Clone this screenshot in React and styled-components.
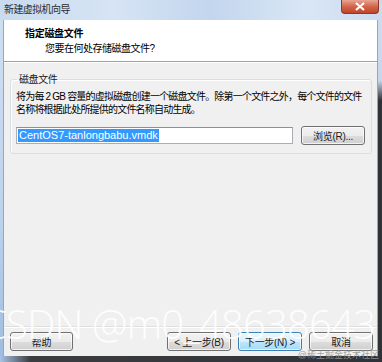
import React from "react";
import styled, { createGlobalStyle } from "styled-components";

const GlobalStyle = createGlobalStyle`
  html, body {
    margin: 0;
    padding: 0;
    background: #3a3c40;
  }
  * {
    box-sizing: border-box;
  }
`;

const CJK = `"Liberation Sans", "Noto Sans CJK SC", sans-serif`;

function App() {
  return (
    <>
      <GlobalStyle />
      <Window>
        <TitleBar>
          <TitleText>新建虚拟机向导</TitleText>
          <CloseButton>
            <svg width="12" height="9" viewBox="0 0 12 9">
              <path d="M2 1 L10 8 M10 1 L2 8" stroke="#fff" strokeWidth="2.2" />
            </svg>
          </CloseButton>
        </TitleBar>
        <Body>
          <LeftFrame />
          <Client>
            <Header>
              <HeaderTitle>指定磁盘文件</HeaderTitle>
              <HeaderSub>您要在何处存储磁盘文件?</HeaderSub>
            </Header>
            <Content>
              <GroupBox>
                <Legend>磁盘文件</Legend>
                <Description>
                  将为每 2 GB 容量的虚拟磁盘创建一个磁盘文件。除第一个文件之外，每个文件的文件
                  <br />
                  名称将根据此处所提供的文件名称自动生成。
                </Description>
                <FileRow>
                  <FileInput>
                    <Selected>CentOS7-tanlongbabu.vmdk</Selected>
                  </FileInput>
                  <Button width={64}>浏览(R)...</Button>
                </FileRow>
              </GroupBox>
            </Content>
            <Footer>
              <Button width={63}>帮助</Button>
              <NavGroup>
                <Button width={64}>&lt; 上一步(B)</Button>
                <Button width={64} primary>
                  下一步(N) &gt;
                </Button>
                <Button width={64}>取消</Button>
              </NavGroup>
            </Footer>
          </Client>
          <RightFrame />
        </Body>
        <BottomFrame />
        <Watermark>CSDN @m0_48638643</Watermark>
        <SmallMark>@稀土掘金技术社区</SmallMark>
      </Window>
    </>
  );
}

const Window = styled.div`
  position: relative;
  width: 382px;
  height: 362px;
  display: flex;
  flex-direction: column;
  overflow: hidden;
  font-family: ${CJK};
  font-size: 10px;
  color: #000;
`;

const TitleBar = styled.div`
  height: 20px;
  display: flex;
  align-items: flex-start;
  justify-content: space-between;
  padding-left: 4px;
  padding-right: 3px;
  background: linear-gradient(
    90deg,
    #c9dbef 0%,
    #d6e4f4 30%,
    #c3d6ee 55%,
    #d9e6f5 80%,
    #cbdcf0 100%
  );
`;

const TitleText = styled.span`
  margin-top: 4px;
  font-size: 10px;
  line-height: 12px;
  color: #2a2a2a;
  letter-spacing: -0.6px;
`;

const CloseButton = styled.div`
  width: 38px;
  height: 14px;
  display: flex;
  align-items: center;
  justify-content: center;
  border: 1px solid #8a3a2a;
  border-top: none;
  border-radius: 0 0 4px 4px;
  background: linear-gradient(180deg, #e8a593 0%, #d2654a 50%, #c0452a 100%);
`;

const Body = styled.div`
  flex: 1;
  display: flex;
  min-height: 0;
`;

const LeftFrame = styled.div`
  width: 4px;
  background: linear-gradient(180deg, #cfdff2 0%, #bcd2ec 60%, #9fbde2 100%);
  border-right: 1px solid #8fa8c6;
`;

const RightFrame = styled.div`
  width: 5px;
  background: linear-gradient(
    180deg,
    #cddcf0 0%,
    #c5d7ee 18%,
    #2f3236 24%,
    #2f3236 100%
  );
  border-left: 1px solid #8fa8c6;
`;

const Client = styled.div`
  flex: 1;
  display: flex;
  flex-direction: column;
  background: #f0f0f0;
`;

const Header = styled.div`
  height: 42px;
  display: flex;
  flex-direction: column;
  justify-content: center;
  padding-left: 21px;
  background: #fff;
  border-bottom: 1px solid #a0a0a0;
  box-shadow: 0 1px 0 #fff;
`;

const HeaderTitle = styled.div`
  font-weight: bold;
  font-size: 10px;
  line-height: 13px;
  letter-spacing: -0.3px;
`;

const HeaderSub = styled.div`
  margin-top: 2px;
  padding-left: 20px;
  font-size: 10px;
  line-height: 13px;
  letter-spacing: -0.5px;
`;

const Content = styled.div`
  flex: 1;
  padding: 11px 5px 0 6px;
`;

const GroupBox = styled.fieldset`
  margin: 0;
  padding: 0 6px 8px 5px;
  border: 1px solid #d5dfe5;
  border-radius: 3px;
  box-shadow: inset 1px 1px 0 #fff;
`;

const Legend = styled.legend`
  padding: 0 2px;
  margin-left: 1px;
  font-size: 10px;
  line-height: 13px;
  letter-spacing: -0.4px;
  color: #1a1a1a;
`;

const Description = styled.p`
  margin: 4px 0 0;
  font-size: 10px;
  line-height: 13px;
  letter-spacing: -0.8px;
  white-space: nowrap;
`;

const FileRow = styled.div`
  display: flex;
  align-items: center;
  justify-content: space-between;
  margin-top: 10px;
`;

const FileInput = styled.div`
  width: 277px;
  height: 17px;
  display: flex;
  align-items: center;
  padding-left: 1px;
  background: #fff;
  border: 1px solid #abadb3;
  border-top-color: #8e8f8f;
`;

const Selected = styled.span`
  padding: 0 1px;
  background: #3399ff;
  color: #fff;
  font-size: 11px;
  line-height: 13px;
`;

const Button = styled.div`
  width: ${(p) => p.width}px;
  height: 19px;
  display: flex;
  align-items: center;
  justify-content: center;
  font-size: 10px;
  letter-spacing: -0.3px;
  color: #1a1a1a;
  border: 1px solid ${(p) => (p.primary ? "#3c7fb1" : "#707070")};
  border-radius: 3px;
  background: ${(p) =>
    p.primary
      ? "linear-gradient(180deg, #eaf6fd 0%, #d9f0fc 50%, #bee6fd 51%, #a7d9f5 100%)"
      : "linear-gradient(180deg, #f2f2f2 0%, #ebebeb 50%, #dddddd 51%, #cfcfcf 100%)"};
  box-shadow: inset 0 0 0 1px rgba(255, 255, 255, 0.7);
`;

const Footer = styled.div`
  display: flex;
  align-items: center;
  justify-content: space-between;
  height: 30px;
  padding: 3px 4px 3px 6px;
  border-top: 1px solid #dfdfdf;
  box-shadow: inset 0 1px 0 #fff;
`;

const NavGroup = styled.div`
  display: flex;
  gap: 7px;
`;

const BottomFrame = styled.div`
  height: 6px;
  background: linear-gradient(90deg, #a8c4e6 0%, #3a3c40 8%, #2f3236 100%);
`;

const Watermark = styled.div`
  position: absolute;
  left: -18px;
  top: 304px;
  font-family: "Open Sans", "Liberation Sans", sans-serif;
  font-weight: 300;
  font-size: 40px;
  line-height: 40px;
  letter-spacing: -0.8px;
  color: rgba(255, 255, 255, 0.92);
  white-space: nowrap;
  pointer-events: none;
`;

const SmallMark = styled.div`
  position: absolute;
  right: 3px;
  bottom: 1px;
  font-family: ${CJK};
  font-size: 9px;
  color: rgba(150, 150, 150, 0.9);
  white-space: nowrap;
`;

export default App;
